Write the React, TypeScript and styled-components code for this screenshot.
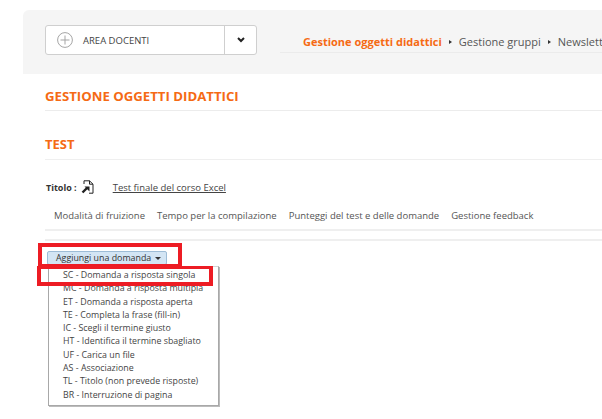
import React from "react";
import styled, { createGlobalStyle } from "styled-components";

const GlobalStyle = createGlobalStyle`
    html, body {
        margin: 0;
        padding: 0;
        background: #fff;
        overflow: hidden;
    }
    body {
        font-family: "Open Sans", "Liberation Sans", sans-serif;
    }
`;

const MENU_ITEMS = [
    "SC - Domanda a risposta singola",
    "MC - Domanda a risposta multipla",
    "ET - Domanda a risposta aperta",
    "TE - Completa la frase (fill-in)",
    "IC - Scegli il termine giusto",
    "HT - Identifica il termine sbagliato",
    "UF - Carica un file",
    "AS - Associazione",
    "TL - Titolo (non prevede risposte)",
    "BR - Interruzione di pagina",
];

const TABS = [
    "Modalità di fruizione",
    "Tempo per la compilazione",
    "Punteggi del test e delle domande",
    "Gestione feedback",
];

const App = () => {
    return (
        <Page>
            <GlobalStyle />
            <Header>
                <AreaBox>
                    <AreaLabel>
                        <svg width="16" height="16" viewBox="0 0 16 16" fill="none" stroke="#a5a5a5" strokeWidth="1">
                            <circle cx="8" cy="8" r="7.4" />
                            <path d="M8 3.5v9M3.5 8h9" />
                        </svg>
                        <span>AREA DOCENTI</span>
                    </AreaLabel>
                    <AreaToggle>
                        <svg width="8" height="6" viewBox="0 0 8 6" fill="none" stroke="#222" strokeWidth="2">
                            <path d="M1 1l3 3 3-3" />
                        </svg>
                    </AreaToggle>
                </AreaBox>
                <Nav>
                    <NavItem $active>Gestione oggetti didattici</NavItem>
                    <NavSep />
                    <NavItem>Gestione gruppi</NavItem>
                    <NavSep />
                    <NavItem>Newsletter</NavItem>
                </Nav>
            </Header>
            <Content>
                <PageTitle>GESTIONE OGGETTI DIDATTICI</PageTitle>
                <SectionTitle>TEST</SectionTitle>
                <TitleRow>
                    <TitleLabel>Titolo :</TitleLabel>
                    <svg width="13" height="14" viewBox="0 0 13 14" fill="none" stroke="#222" strokeWidth="1">
                        <path d="M3 4V.8h5.5L12 4.2v9H8" />
                        <path d="M8.5.8v3.4H12" />
                        <path d="M1.5 12.5L6 8" strokeWidth="2.4" />
                        <path d="M3.5 6.5h5v5z" fill="#222" stroke="none" />
                    </svg>
                    <TitleLink>Test finale del corso Excel</TitleLink>
                </TitleRow>
                <Tabs>
                    {TABS.map((tab) => (
                        <Tab key={tab}>{tab}</Tab>
                    ))}
                </Tabs>
                <Rule />
                <Dropdown>
                    <AddButton>
                        Aggiungi una domanda
                        <Caret />
                    </AddButton>
                    <Menu>
                        {MENU_ITEMS.map((item) => (
                            <MenuItem key={item}>{item}</MenuItem>
                        ))}
                    </Menu>
                    <ButtonMark />
                    <ItemMark />
                </Dropdown>
            </Content>
        </Page>
    );
};

export default App;

const Page = styled.div`
    width: 602px;
    height: 419px;
    overflow: hidden;
    padding-top: 10px;
    box-sizing: border-box;
`;

const Header = styled.div`
    margin-left: 23px;
    height: 64px;
    padding: 15px 0 0 22px;
    box-sizing: border-box;
    display: flex;
    align-items: flex-start;
    gap: 23px;
    background: #f5f5f5;
    border-top-left-radius: 6px;
`;

const AreaBox = styled.div`
    flex: none;
    width: 212px;
    height: 30px;
    box-sizing: border-box;
    display: flex;
    background: #fff;
    border: 1px solid #cfcfcf;
    border-radius: 3px;
`;

const AreaLabel = styled.div`
    flex: 1;
    display: flex;
    align-items: center;
    gap: 10px;
    padding-left: 11px;
    font-size: 9.5px;
    color: #444;
`;

const AreaToggle = styled.div`
    flex: none;
    width: 31px;
    display: flex;
    align-items: center;
    justify-content: center;
    border-left: 1px solid #cfcfcf;
`;

const Nav = styled.div`
    flex: 1;
    height: 28px;
    padding: 6px 0 0 23px;
    box-sizing: border-box;
    display: flex;
    align-items: center;
    gap: 7px;
    white-space: nowrap;
    overflow: hidden;
    border-bottom: 1px solid #ebebeb;
`;

const NavItem = styled.span<{ $active?: boolean }>`
    font-size: 11px;
    font-weight: ${(p) => (p.$active ? 700 : 400)};
    color: ${(p) => (p.$active ? "#f56a14" : "#555")};
`;

const NavSep = styled.i`
    flex: none;
    width: 0;
    height: 0;
    border-left: 3px solid #333;
    border-top: 2px solid transparent;
    border-bottom: 2px solid transparent;
`;

const Content = styled.div`
    padding-left: 45px;
`;

const PageTitle = styled.h1`
    margin: 0;
    height: 37px;
    padding-top: 13px;
    box-sizing: border-box;
    font-size: 13.2px;
    line-height: 18px;
    font-weight: 700;
    color: #f56a14;
    border-bottom: 1px solid #ececec;
`;

const SectionTitle = styled.h2`
    margin: 0;
    height: 49px;
    padding-top: 24px;
    box-sizing: border-box;
    font-size: 13px;
    line-height: 18px;
    font-weight: 700;
    color: #f56a14;
    border-bottom: 1px solid #efefef;
`;

const TitleRow = styled.div`
    margin-top: 19px;
    padding-left: 1px;
    display: flex;
    align-items: center;
    gap: 4px;
    height: 16px;
`;

const TitleLabel = styled.span`
    font-size: 9px;
    font-weight: 700;
    color: #333;
`;

const TitleLink = styled.a`
    margin-left: 15px;
    padding-top: 1px;
    font-size: 9.5px;
    color: #444;
    text-decoration: underline;
`;

const Tabs = styled.div`
    margin-top: 14px;
    padding: 0 0 7px 9px;
    display: flex;
    gap: 12px;
    border-bottom: 2px solid #efefef;
    white-space: nowrap;
`;

const Tab = styled.span`
    font-size: 9.5px;
    line-height: 13px;
    color: #555;
`;

const Rule = styled.div`
    margin-top: 8px;
    height: 2px;
    background: #efefef;
`;

const Dropdown = styled.div`
    position: relative;
    margin-top: 10px;
    padding-left: 2px;
    width: 176px;
`;

const AddButton = styled.div`
    width: 120px;
    height: 14px;
    box-sizing: border-box;
    display: flex;
    align-items: center;
    gap: 4px;
    padding-left: 8px;
    font-size: 8.85px;
    white-space: nowrap;
    color: #333;
    background: #d3e5f4;
    border: 1px solid #9dbcd6;
    border-radius: 2px;
`;

const Caret = styled.i`
    width: 0;
    height: 0;
    border-top: 3px solid #333;
    border-left: 3px solid transparent;
    border-right: 3px solid transparent;
`;

const Menu = styled.ul`
    list-style: none;
    margin: 1px 0 0 1px;
    padding: 2px 0 3px 14px;
    width: 171px;
    box-sizing: border-box;
    background: #fff;
    border: 1px solid #a8a8a8;
    border-top-color: #d5d5d5;
    box-shadow: 1px 1px 0 #bcbcbc;
`;

const MenuItem = styled.li`
    font-size: 8.85px;
    line-height: 13.3px;
    white-space: nowrap;
    color: #444;
`;

const ButtonMark = styled.div`
    position: absolute;
    left: -7px;
    top: -8px;
    width: 144px;
    height: 24px;
    box-sizing: border-box;
    border: 4px solid #ed1c24;
    border-bottom-width: 3px;
`;

const ItemMark = styled.div`
    position: absolute;
    left: -8px;
    top: 15px;
    width: 176px;
    height: 20px;
    box-sizing: border-box;
    border: 4px solid #ed1c24;
    border-top-width: 3px;
`;
